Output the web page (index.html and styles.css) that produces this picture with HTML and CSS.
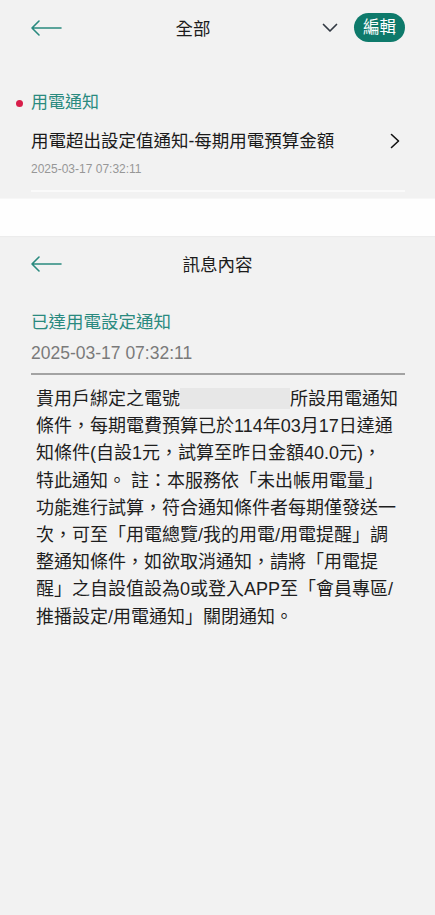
FILE: index.html
```html
<!DOCTYPE html>
<html lang="zh-Hant">
<head>
<meta charset="utf-8">
<title>用電通知</title>
<link rel="stylesheet" href="styles.css">
</head>
<body>
<header class="topbar">
  <span class="back">
    <svg width="32" height="16" viewBox="0 0 32 16"><path d="M31 8H2M9 1L2 8l7 7" fill="none" stroke="#2a8a7f" stroke-width="1.6" stroke-linecap="round" stroke-linejoin="round"/></svg>
  </span>
  <h1 class="title left-title">全部</h1>
  <div class="actions">
    <svg class="dropdown" width="16" height="10" viewBox="0 0 16 10"><path d="M1.5 1.5L8 8l6.5-6.5" fill="none" stroke="#333a44" stroke-width="1.7" stroke-linecap="round" stroke-linejoin="round"/></svg>
    <span class="edit-btn">編輯</span>
  </div>
</header>

<section class="notice-list">
  <div class="category"><span class="dot"></span>用電通知</div>
  <div class="notice-row">
    <div class="notice-main">
      <div class="notice-title">用電超出設定值通知-每期用電預算金額</div>
      <div class="notice-date">2025-03-17 07:32:11</div>
    </div>
    <svg class="chev" width="10" height="16" viewBox="0 0 10 16"><path d="M1.5 1.5L8.5 8l-7 6.5" fill="none" stroke="#111" stroke-width="1.6" stroke-linecap="round" stroke-linejoin="round"/></svg>
  </div>
  <div class="list-divider"></div>
</section>

<div class="white-band"></div>

<header class="topbar detail-bar">
  <span class="back">
    <svg width="32" height="16" viewBox="0 0 32 16"><path d="M31 8H2M9 1L2 8l7 7" fill="none" stroke="#2a8a7f" stroke-width="1.6" stroke-linecap="round" stroke-linejoin="round"/></svg>
  </span>
  <h1 class="title center-title">訊息內容</h1>
</header>

<section class="detail">
  <h2 class="detail-title">已達用電設定通知</h2>
  <div class="detail-date">2025-03-17 07:32:11</div>
  <div class="detail-divider"></div>
  <p class="detail-body">貴用戶綁定之電號<span class="redact"></span>所設用電通知<br>條件，每期電費預算已於114年03月17日達通<br>知條件(自設1元，試算至昨日金額40.0元)，<br>特此通知。 註：本服務依「未出帳用電量」<br>功能進行試算，符合通知條件者每期僅發送一<br>次，可至「用電總覽/我的用電/用電提醒」調<br>整通知條件，如欲取消通知，請將「用電提<br>醒」之自設值設為0或登入APP至「會員專區/<br>推播設定/用電通知」關閉通知。</p>
</section>
</body>
</html>
```

FILE: styles.css
```css
* { box-sizing: border-box; }
html, body {
  margin: 0;
  padding: 0;
  background: #f2f2f2;
  font-family: "Liberation Sans", "Noto Sans CJK TC", sans-serif;
  color: #1c1c1c;
}
.topbar {
  height: 55px;
  display: flex;
  align-items: center;
  padding: 0 30px 0 30px;
  position: relative;
}
.back {
  display: flex;
  width: 34px;
}
.title {
  margin: 0;
  font-size: 17.5px;
  font-weight: 400;
  color: #1c1c1c;
}
.left-title {
  flex: 1;
  text-align: center;
}
.actions {
  display: flex;
  align-items: center;
  gap: 16px;
}
.dropdown { display: block; }
.edit-btn {
  background: #0e7a6b;
  color: #fff;
  font-size: 16.5px;
  line-height: 29px;
  height: 29px;
  padding: 0 9px;
  border-radius: 15px;
}
.notice-list {
  padding: 36px 30px 0 31px;
}
.category {
  position: relative;
  font-size: 17px;
  line-height: 24px;
  color: #2a8a7f;
}
.dot {
  position: absolute;
  left: -15px;
  top: 9px;
  width: 7px;
  height: 7px;
  border-radius: 50%;
  background: #d81e4a;
}
.notice-row {
  display: flex;
  align-items: flex-start;
  justify-content: space-between;
  margin-top: 14px;
}
.notice-title {
  font-size: 17.5px;
  line-height: 24px;
  color: #1a1a1a;
}
.notice-date {
  margin-top: 8px;
  font-size: 12px;
  line-height: 16px;
  color: #979797;
}
.chev {
  margin-top: 4px;
  margin-right: 5px;
}
.list-divider {
  height: 2px;
  margin-top: 13px;
  background: #fafafa;
}
.white-band {
  margin-top: 6px;
  height: 38px;
  background: #fefefe;
  border-top: 1px solid #f7f7f7;
  box-shadow: 0 1px 1px #ececec;
}
.detail-bar .back { position: absolute; left: 30px; top: 20px; }
.center-title {
  flex: 1;
  text-align: center;
}
.detail {
  padding: 19px 30px 0 31px;
}
.detail-title {
  margin: 0;
  font-size: 17.5px;
  font-weight: 400;
  line-height: 24px;
  color: #2a8a7f;
}
.detail-date {
  margin-top: 7px;
  font-size: 17.5px;
  line-height: 24px;
  color: #7a7a7a;
}
.detail-divider {
  margin-top: 8px;
  height: 2px;
  background: #a3a3a3;
}
.detail-body {
  margin: 11px 0 0 5px;
  font-size: 18px;
  line-height: 27.2px;
  color: #1e1e1e;
  white-space: nowrap;
}
.redact {
  display: inline-block;
  width: 110px;
  height: 21px;
  vertical-align: -4px;
  background: #e7e7e7;
}
```
